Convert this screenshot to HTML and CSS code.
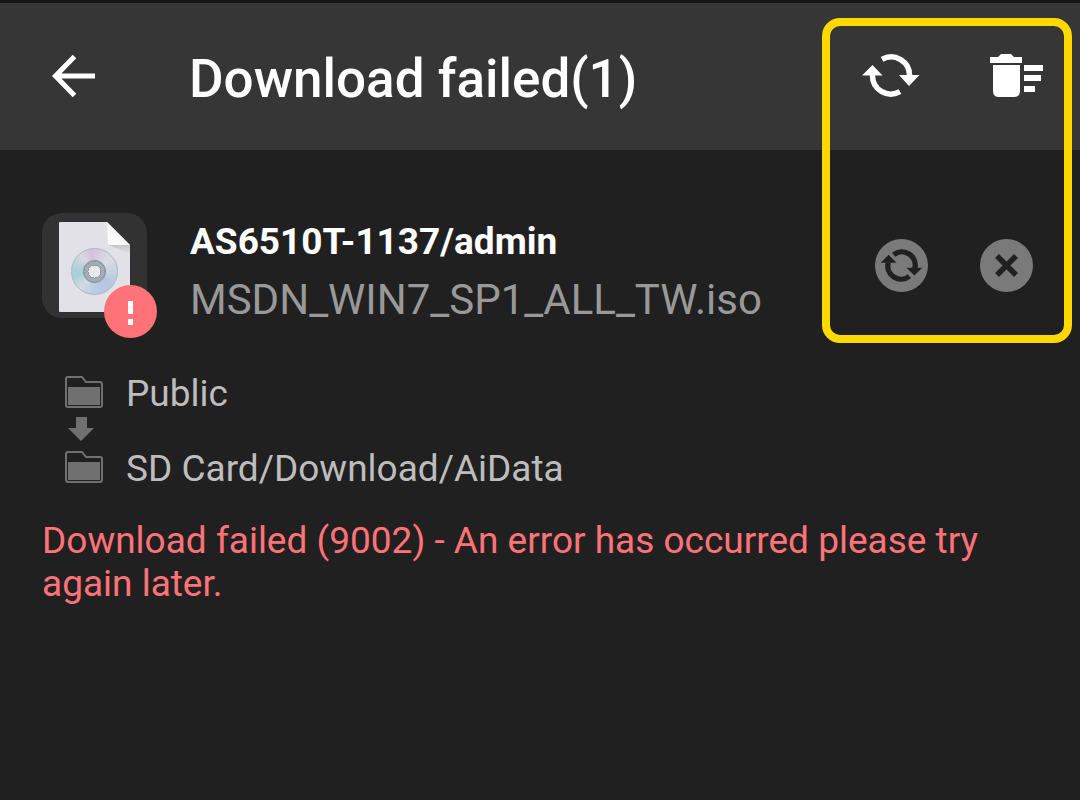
FILE: index.html
```html
<!DOCTYPE html>
<html lang="en">
<head>
  <meta charset="UTF-8">
  <meta name="viewport" content="width=device-width, initial-scale=1.0">
  <title>Download failed</title>
  <link rel="stylesheet" href="styles.css">
</head>
<body>
  <header class="toolbar">
    <button type="button" class="icon-btn back" aria-label="Back">
      <svg width="44" height="44" viewBox="0 0 44 44"><path d="M22.500 2.500L3.500 22L22.500 41.500M4 22H43" fill="none" stroke="#fff" stroke-width="5"/></svg>
    </button>
    <h1 class="title">Download failed(1)</h1>
    <div class="toolbar-actions">
      <button type="button" class="icon-btn" aria-label="Retry all">
        <svg width="60" height="46" viewBox="0 0 60 46">
          <path d="M21 6.300A18.500 18.500 0 0 1 48.500 23M39 38.700A18.500 18.500 0 0 1 11.500 22" fill="none" stroke="#fff" stroke-width="5.500"/>
          <path d="M38 22h20.500L48 33zM1 22.500h20.500L11.500 12z" fill="#fff"/>
        </svg>
      </button>
      <button type="button" class="icon-btn" aria-label="Delete all">
        <svg width="54" height="46" viewBox="0 0 54 46" fill="#fff">
          <path d="M0 4h8l3-3h10l3 3h8v6H0zM3 12h27v26q0 6-6 6H9q-6 0-6-6z"/>
          <path d="M34 12h19v6H34zM34 22h17v6H34zM34 33h11v6H34z"/>
        </svg>
      </button>
    </div>
  </header>

  <main class="task">
    <div class="task-head">
      <div class="thumb">
        <svg width="105" height="105" viewBox="0 0 105 105">
          <defs>
            <linearGradient id="fold" x1="0" y1="1" x2="1" y2="0">
              <stop offset="0" stop-color="#fff"/>
              <stop offset="1" stop-color="#ececee"/>
            </linearGradient>
            <linearGradient id="shade" x1="0" y1="0" x2="0" y2="1">
              <stop offset="0" stop-color="#c4c4ca"/>
              <stop offset="1" stop-color="#e2e1e7"/>
            </linearGradient>
          </defs>
          <path d="M18 9h47l23 23v66q0 1-1 1H18q-1 0-1-1V10q0-1 1-1z" fill="#e2e1e7"/>
          <path d="M66 32h22v9z" fill="url(#shade)"/>
          <path d="M65 9l23 23H68q-2 0-2-2z" fill="url(#fold)"/>
        </svg>
        <span class="disc"></span>
        <span class="badge">
          <svg width="53" height="53" viewBox="0 0 53 53" fill="#fff"><path d="M24 16h5v13h-5zM24 34h5v6h-5z"/></svg>
        </span>
      </div>
      <div class="task-text">
        <h2 class="task-owner">AS6510T-1137/admin</h2>
        <p class="task-file">MSDN_WIN7_SP1_ALL_TW.iso</p>
      </div>
      <div class="task-actions">
        <button type="button" class="round-btn" aria-label="Retry">
          <svg width="43" height="33" viewBox="0 0 60 46">
            <path d="M19 8A18.500 18.500 0 0 1 48.500 27M41 38A18.500 18.500 0 0 1 11.500 19" fill="none" stroke="#202020" stroke-width="7.500"/>
            <path d="M37 26h22L48 37zM1 19h22L12 8z" fill="#202020"/>
          </svg>
        </button>
        <button type="button" class="round-btn" aria-label="Cancel">
          <svg width="25" height="25" viewBox="0 0 25 25"><path d="M3 3l19 19M22 3L3 22" stroke="#202020" stroke-width="5.500"/></svg>
        </button>
      </div>
    </div>

    <div class="route">
      <div class="route-row">
        <svg class="folder" width="38" height="32" viewBox="0 0 38 32">
          <path d="M1 3q0-2 2-2h14l4 5h14q2 0 2 2v21q0 2-2 2H3q-2 0-2-2z" fill="none" stroke="#707070" stroke-width="2"/>
          <path d="M3 11h32v18H3z" fill="#707070"/>
        </svg>
        <span>Public</span>
      </div>
      <svg class="route-arrow" width="26" height="24" viewBox="0 0 26 24"><path d="M8 0h11v11h7L13 24L0 11h8z" fill="#707070"/></svg>
      <div class="route-row">
        <svg class="folder" width="38" height="32" viewBox="0 0 38 32">
          <path d="M1 3q0-2 2-2h14l4 5h14q2 0 2 2v21q0 2-2 2H3q-2 0-2-2z" fill="none" stroke="#707070" stroke-width="2"/>
          <path d="M3 11h32v18H3z" fill="#707070"/>
        </svg>
        <span>SD Card/Download/AiData</span>
      </div>
    </div>

    <p class="error">Download failed (9002) - An error has occurred please try again later.</p>
  </main>

  <div class="highlight"></div>
</body>
</html>
```

FILE: styles.css
```css
:root {
  --bg: #202020;
  --bar: #363636;
  --red: #ff7378;
  --yellow: #ffd800;
}
*, *::before, *::after { box-sizing: border-box; }
body {
  margin: 0;
  position: relative;
  min-height: 100vh;
  background: var(--bg);
  color: #fff;
  font-family: Roboto, "Liberation Sans", sans-serif;
}
h1, h2, p { margin: 0; }
button { padding: 0; border: 0; cursor: pointer; }
svg { display: block; flex-shrink: 0; }

.toolbar {
  display: flex;
  align-items: center;
  height: 150px;
  padding: 0 36px 2px 52px;
  border-top: 3px solid #161616;
  background: var(--bar);
}
.icon-btn { background: none; }
.title {
  flex: 1;
  margin-left: 93px;
  padding-top: 6px;
  font-size: 53px;
  font-weight: 500;
  line-height: 62px;
}
.toolbar-actions { display: flex; gap: 69px; }

.task { padding: 63px 42px 0; }
.task-head { display: flex; }
.thumb {
  position: relative;
  width: 105px;
  height: 105px;
  border-radius: 20px;
  background: #323232;
}
.disc {
  position: absolute;
  left: 29px;
  top: 35px;
  width: 47px;
  height: 47px;
  border: 1px solid #a9b8c6;
  border-radius: 50%;
  background:
    radial-gradient(circle, #e8e8ec 0 6px, #8f9ba2 6px 7px, #a3adb3 7px 10px, #8f9ba2 10px 11px, transparent 12px),
    conic-gradient(#d3c6dc, #dcdde2 50deg, #c9d2e0 90deg, #b4c5de 130deg, #bccbe2 180deg, #d3dae3 220deg, #a4d0d6 260deg, #b9d3da 290deg, #d8d9df 320deg, #d3c0dc 350deg, #d3c6dc);
}
.badge {
  position: absolute;
  left: 62px;
  top: 72px;
  border-radius: 50%;
  background: var(--red);
}
.task-text { flex: 1; margin-left: 43px; }
.task-owner {
  margin-top: 7px;
  font-size: 37px;
  font-weight: 700;
  line-height: 43px;
}
.task-file {
  margin-top: 12px;
  color: #999;
  font-size: 42px;
  line-height: 50px;
}
.task-actions {
  display: flex;
  gap: 52px;
  padding: 26px 5px 0 0;
}
.round-btn {
  display: flex;
  align-items: center;
  justify-content: center;
  width: 53px;
  height: 53px;
  border-radius: 50%;
  background: #7a7a7a;
}

.route {
  margin-top: 47px;
  padding-left: 23px;
  color: #bdbdbd;
  font-size: 37px;
  line-height: 43px;
}
.route-row { display: flex; gap: 23px; }
.folder { margin-top: 4px; }
.route-arrow { margin: 2px 0 6px 3px; }

.error {
  margin-top: 29px;
  color: var(--red);
  font-size: 37px;
  line-height: 43px;
}

/* callout around the retry and delete buttons */
.highlight {
  position: absolute;
  top: 18px;
  right: 8px;
  width: 250px;
  height: 325px;
  border: 8px solid var(--yellow);
  border-radius: 18px;
  pointer-events: none;
}
```
